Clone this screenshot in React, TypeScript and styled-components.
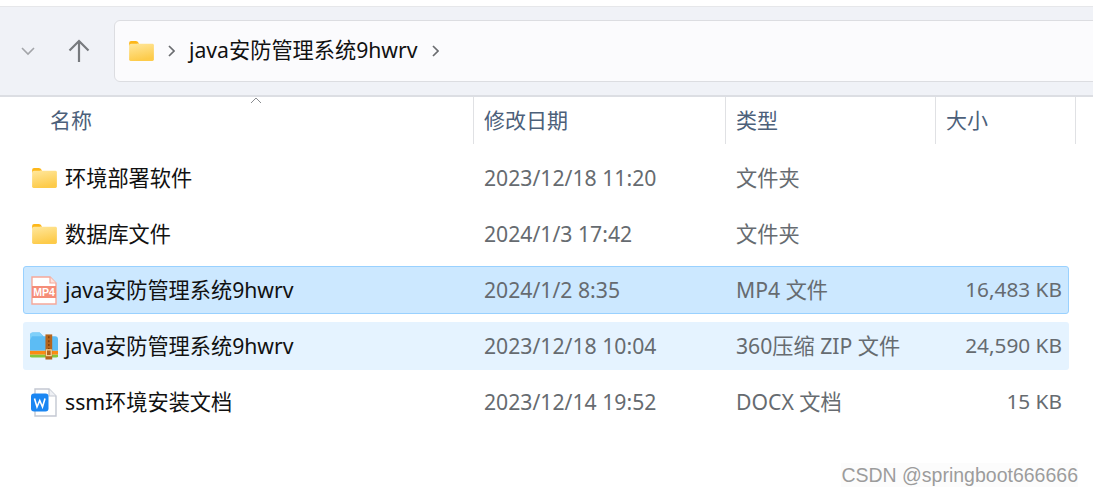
import React from 'react';
import styled, { createGlobalStyle } from 'styled-components';

const GlobalStyle = createGlobalStyle`
  html, body {
    margin: 0;
    padding: 0;
    background: #ffffff;
    overflow: hidden;
  }
`;

const FONT = `"Noto Sans", "Noto Sans CJK SC", sans-serif`;

const Window = styled.div`
  position: relative;
  width: 1093px;
  height: 495px;
  padding-top: 6px;
  box-sizing: border-box;
  font-family: ${FONT};
  background: #ffffff;
  overflow: hidden;
`;

const Toolbar = styled.div`
  display: flex;
  align-items: center;
  height: 91px;
  box-sizing: border-box;
  background: #f0f2f7;
  border-top: 1px solid #e6e7ea;
  border-bottom: 2px solid #dcdee3;
  padding-left: 20px;
`;

const NavButton = styled.div<{ $width: number; $offset?: number }>`
  display: flex;
  align-items: center;
  justify-content: center;
  width: ${(p) => p.$width}px;
  margin-left: ${(p) => p.$offset ?? 0}px;
  flex: none;
`;

const AddressBar = styled.div`
  display: flex;
  align-items: center;
  flex: 1;
  height: 62px;
  box-sizing: border-box;
  margin-left: 24px;
  margin-right: -8px;
  padding-left: 14px;
  background: #fbfbfd;
  border: 1px solid #dcdde1;
  border-radius: 6px;
`;

const Crumb = styled.span`
  font-size: 21.2px;
  line-height: 28px;
  color: #111;
  margin: 0 14px;
  padding-bottom: 2px;
  white-space: nowrap;
`;

const CrumbGap = styled.span`
  display: flex;
  margin-left: 14px;
`;

const HeaderRow = styled.div`
  display: grid;
  grid-template-columns: 473px 252px 210px 141px;
  height: 47px;
`;

const HeaderCell = styled.div<{ $inset: number; $divider?: boolean; $last?: boolean }>`
  position: relative;
  display: flex;
  align-items: center;
  padding-left: ${(p) => p.$inset}px;
  padding-bottom: 4px;
  box-sizing: border-box;
  font-size: 21px;
  color: #4c607a;
  border-left: ${(p) => (p.$divider ? '1px solid #e0e1e4' : 'none')};
  border-right: ${(p) => (p.$last ? '1px solid #e0e1e4' : 'none')};
`;

const SortCaret = styled.svg`
  position: absolute;
  left: 250px;
  top: 0;
`;

const FileList = styled.div`
  display: flex;
  flex-direction: column;
  gap: 8px;
  padding: 10px 24px 0 23px;
`;

const Row = styled.div<{ $state?: 'selected' | 'hover' }>`
  display: grid;
  grid-template-columns: 450px 252px 210px 1fr;
  align-items: center;
  height: 48px;
  box-sizing: border-box;
  border-radius: 3px;
  font-size: 21.2px;
  background: ${(p) =>
    p.$state === 'selected' ? '#cce8ff' : p.$state === 'hover' ? '#e5f3ff' : 'transparent'};
  border: 1px solid ${(p) => (p.$state === 'selected' ? '#99d1ff' : 'transparent')};
`;

const NameCell = styled.div`
  display: flex;
  align-items: center;
  padding-left: 6px;
  color: #111;
  white-space: nowrap;
`;

const IconSlot = styled.div`
  display: flex;
  align-items: center;
  justify-content: center;
  width: 28px;
  height: 32px;
  margin-right: 7px;
  flex: none;
`;

const NameText = styled.span`
  padding-bottom: 4px;
`;

const MetaCell = styled.div`
  color: #666b70;
  white-space: nowrap;
  padding-left: 10px;
  padding-bottom: 2px;
`;

const KindCell = styled(MetaCell)`
  padding-bottom: 4px;
`;

const SizeCell = styled(MetaCell)`
  padding-left: 0;
  padding-right: 6px;
  font-size: 20.8px;
  text-align: right;
`;

const Watermark = styled.div`
  position: absolute;
  right: 15px;
  top: 463px;
  font-family: "Liberation Sans", Arial, sans-serif;
  font-size: 19.5px;
  line-height: 24px;
  color: #9c9c9c;
  background: rgba(250, 250, 250, 0.5);
  white-space: nowrap;
`;

const Chevron = () => (
  <svg width="14" height="10" viewBox="0 0 14 10">
    <path d="M1 2 L7 8 L13 2" fill="none" stroke="#a3a5a9" strokeWidth="1.6" />
  </svg>
);

const UpArrow = () => (
  <svg width="22" height="24" viewBox="0 0 22 24">
    <path d="M11 23 V2 M1.5 11.5 L11 2 L20.5 11.5" fill="none" stroke="#777a7e" strokeWidth="2.2" />
  </svg>
);

const CrumbArrow = () => (
  <svg width="7" height="12" viewBox="0 0 7 12">
    <path d="M1 1 L6 6 L1 11" fill="none" stroke="#6a6c70" strokeWidth="1.7" />
  </svg>
);

const FolderIcon = () => (
  <svg width="25" height="20" viewBox="0 0 26 21">
    <path d="M0 2 Q0 0 2 0 H7 Q9 0 10 2 L10.5 3 H9 L0 5 Z" fill="#fdb71a" />
    <path d="M0 5 Q0 3 2 3 H24.5 Q26 3 26 4.5 V19.5 Q26 21 24.5 21 H1.5 Q0 21 0 19.5 Z" fill="url(#folderFill)" />
    <defs>
      <linearGradient id="folderFill" x1="0" y1="0" x2="0.3" y2="1">
        <stop offset="0" stopColor="#ffe79c" />
        <stop offset="1" stopColor="#fdcb4a" />
      </linearGradient>
    </defs>
  </svg>
);

const Mp4Icon = () => (
  <svg width="26" height="29" viewBox="0 0 26 29">
    <path d="M1 1 H19 L25 7 V28 H1 Z" fill="#fff" stroke="#f6a899" strokeWidth="1.4" />
    <path d="M19 1 V7 H25" fill="#fde2dc" stroke="#f6a899" strokeWidth="1.2" />
    <rect x="1" y="10" width="24" height="12" fill="#f58d78" />
    <text x="13" y="20" textAnchor="middle" fontFamily="Liberation Sans, sans-serif" fontSize="10.5" fontWeight="700" fill="#fff">
      MP4
    </text>
  </svg>
);

const ZipIcon = () => (
  <svg width="29" height="28" viewBox="0 0 29 28">
    <path d="M0 3 Q0 0 3 0 H10 L14 4 H26 Q29 4 29 7 V19 H0 Z" fill="#5cbcf4" />
    <path d="M0 3 Q0 0 3 0 H10 L13 4 H2 L0 8 Z" fill="#7fd0fa" />
    <rect x="0" y="19" width="29" height="4" fill="#fb8b12" />
    <path d="M0 23 H29 V24.5 Q29 26 27 26 H2 Q0 26 0 24.5 Z" fill="#86c63c" />
    <rect x="16" y="2" width="7" height="26" fill="#b5651d" />
    <path d="M19.5 4 V17" stroke="#7a3f0c" strokeWidth="1.4" strokeDasharray="2 2" />
    <rect x="17" y="18" width="5" height="6" fill="none" stroke="#f8d9a0" strokeWidth="1.2" />
  </svg>
);

const WpsIcon = () => (
  <svg width="26" height="29" viewBox="0 0 26 29">
    <path d="M4 1 H18 L25 8 V28 H4 Z" fill="#fff" stroke="#c3c8d2" strokeWidth="1.4" />
    <path d="M18 1 V8 H25" fill="#eef0f4" stroke="#c3c8d2" strokeWidth="1.2" />
    <rect x="0" y="5.5" width="17.5" height="18" rx="3" fill="#1a86f2" />
    <path d="M3.5 10.5 L6 19 L8.75 12.5 L11.5 19 L14 10.5" fill="none" stroke="#fff" strokeWidth="1.6" />
  </svg>
);

type FileRow = {
  name: string;
  date: string;
  kind: string;
  size?: string;
  icon: React.ReactNode;
  state?: 'selected' | 'hover';
};

const files: FileRow[] = [
  { name: '环境部署软件', date: '2023/12/18 11:20', kind: '文件夹', icon: <FolderIcon /> },
  { name: '数据库文件', date: '2024/1/3 17:42', kind: '文件夹', icon: <FolderIcon /> },
  { name: 'java安防管理系统9hwrv', date: '2024/1/2 8:35', kind: 'MP4 文件', size: '16,483 KB', icon: <Mp4Icon />, state: 'selected' },
  { name: 'java安防管理系统9hwrv', date: '2023/12/18 10:04', kind: '360压缩 ZIP 文件', size: '24,590 KB', icon: <ZipIcon />, state: 'hover' },
  { name: 'ssm环境安装文档', date: '2023/12/14 19:52', kind: 'DOCX 文档', size: '15 KB', icon: <WpsIcon /> },
];

export default function App() {
  return (
    <Window>
      <GlobalStyle />
      <Toolbar>
        <NavButton $width={16}>
          <Chevron />
        </NavButton>
        <NavButton $width={22} $offset={32}>
          <UpArrow />
        </NavButton>
        <AddressBar>
          <FolderIcon />
          <CrumbGap>
            <CrumbArrow />
          </CrumbGap>
          <Crumb>java安防管理系统9hwrv</Crumb>
          <CrumbArrow />
        </AddressBar>
      </Toolbar>
      <HeaderRow>
        <HeaderCell $inset={50}>
          名称
          <SortCaret width="12" height="7" viewBox="0 0 12 7">
            <path d="M1 6 L6 1 L11 6" fill="none" stroke="#8a8c90" strokeWidth="1" />
          </SortCaret>
        </HeaderCell>
        <HeaderCell $inset={10} $divider>修改日期</HeaderCell>
        <HeaderCell $inset={10} $divider>类型</HeaderCell>
        <HeaderCell $inset={10} $divider $last>大小</HeaderCell>
      </HeaderRow>
      <FileList>
        {files.map((file) => (
          <Row key={file.name + file.date} $state={file.state}>
            <NameCell>
              <IconSlot>{file.icon}</IconSlot>
              <NameText>{file.name}</NameText>
            </NameCell>
            <MetaCell>{file.date}</MetaCell>
            <KindCell>{file.kind}</KindCell>
            <SizeCell>{file.size}</SizeCell>
          </Row>
        ))}
      </FileList>
      <Watermark>CSDN @springboot666666</Watermark>
    </Window>
  );
}
